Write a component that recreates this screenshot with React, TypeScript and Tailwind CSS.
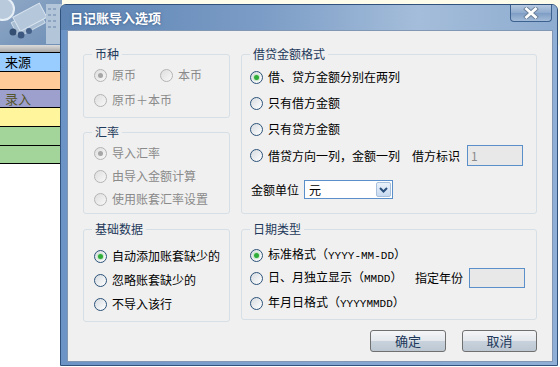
import React from 'react';

function Radio({ checked, disabled }: { checked?: boolean; disabled?: boolean }) {
  if (disabled) {
    return (
      <span className="flex h-[13px] w-[13px] shrink-0 items-center justify-center rounded-full border border-[#b4b4b4] bg-[linear-gradient(135deg,#dedede,#f8f8f8)]">
        {checked && <span className="h-[5px] w-[5px] rounded-full bg-[#a6a6a6]" />}
      </span>
    );
  }
  return (
    <span className="flex h-[13px] w-[13px] shrink-0 items-center justify-center rounded-full border border-[#2c5278] bg-[linear-gradient(135deg,#d6dbe0,#ffffff)]">
      {checked && <span className="h-[5px] w-[5px] rounded-full bg-[#2eab38] shadow-[0_0_0_1px_#c8e8c8]" />}
    </span>
  );
}

function Option({ label, checked, disabled, width }: { label: React.ReactNode; checked?: boolean; disabled?: boolean; width?: string }) {
  return (
    <div className={'flex h-[14px] items-center gap-[5px] ' + (width ?? '')}>
      <Radio checked={checked} disabled={disabled} />
      <span className={disabled ? 'whitespace-nowrap text-[#8a8a8a]' : 'whitespace-nowrap text-black'}>{label}</span>
    </div>
  );
}

function Group({ title, className, children }: { title: string; className: string; children: React.ReactNode }) {
  return (
    <div className={'relative rounded-[3px] border border-[#d5dfe5] ' + className}>
      <span className="absolute left-[8px] top-[-8px] bg-[#f0f0f0] px-[3px] leading-[14px] text-[#1e395b]">{title}</span>
      {children}
    </div>
  );
}

const Mono = ({ children }: { children: string }) => (
  <span className="font-['Liberation_Mono',monospace] text-[11px]">{children}</span>
);

function Banner() {
  return (
    <svg width="62" height="45" viewBox="0 0 62 45">
      <defs>
        <linearGradient id="bn" x1="0" y1="0" x2="1" y2="1">
          <stop offset="0" stopColor="#8fa8c6" />
          <stop offset="1" stopColor="#6f8fb6" />
        </linearGradient>
      </defs>
      <rect width="62" height="45" fill="url(#bn)" />
      <circle cx="3" cy="9" r="11" fill="#b9cadc" stroke="#e6eef6" strokeWidth="2" />
      <g transform="rotate(-28 30 24)">
        <rect x="14" y="14" width="30" height="16" fill="#a9bdd3" stroke="#cddbe9" />
        <rect x="18" y="10" width="30" height="16" fill="#b5c7db" stroke="#dae5f0" />
      </g>
      <circle cx="13" cy="32" r="3.5" fill="#354f73" />
      <circle cx="21" cy="35" r="3.5" fill="#3d5880" />
      <circle cx="29" cy="31" r="3" fill="#45618a" />
      <rect x="46" y="4" width="16" height="40" fill="#b3c5d9" />
      <g fill="#8ea5c2">
        <rect x="48" y="8" width="3" height="2" />
        <rect x="53" y="8" width="3" height="2" />
        <rect x="48" y="14" width="3" height="2" />
        <rect x="53" y="14" width="3" height="2" />
        <rect x="48" y="20" width="3" height="2" />
        <rect x="53" y="20" width="3" height="2" />
        <rect x="48" y="26" width="3" height="2" />
        <rect x="53" y="26" width="3" height="2" />
      </g>
    </svg>
  );
}

export default function App() {
  return (
    <div className="relative h-[367px] w-[560px] overflow-hidden bg-white font-['Noto_Sans_CJK_SC',sans-serif] text-[12px] leading-[14px]">
      {/* background application */}
      <div className="flex h-[45px]">
        <Banner />
        <div className="flex-1 bg-[#fdfbe9]" />
      </div>
      <div className="h-[8px] w-[62px] border-b border-black bg-[linear-gradient(#dcdcdc,#a6a6a6)]" />
      <div className="flex w-[62px] flex-col text-[13px]">
        <div className="flex h-[19px] items-center border-b border-black bg-[#99ccff] pl-[5px] text-black">来源</div>
        <div className="h-[18px] border-b border-black bg-[#ffcc99]" />
        <div className="flex h-[18px] items-center border-b border-black bg-[#9d9fcd] pl-[5px] text-[#55552a]">录入</div>
        <div className="h-[19px] border-b border-black bg-[#fff59c]" />
        <div className="h-[19px] border-b border-black bg-[#a3d49a]" />
        <div className="h-[18px] border-b border-black bg-[#a3d49a]" />
      </div>

      {/* dialog window */}
      <div className="absolute left-[60px] top-[4px] flex h-[362px] w-[498px] flex-col rounded-t-[6px] border border-[#30527c] bg-[linear-gradient(90deg,#6c93c5,#7fa2cf_40%,#90afd6)]">
        <div className="flex h-[25px] shrink-0 items-start justify-between rounded-t-[5px] bg-[linear-gradient(90deg,#5d84b3_0%,#7b9cc6_40%,#a4bdda_72%,#8eacd0_100%)]">
          <span className="ml-[9px] mt-[5px] text-[13px] font-bold leading-[16px] text-white [text-shadow:0_0_3px_#3a5a85]">日记账导入选项</span>
          <div className="mr-[5px] flex h-[17px] w-[42px] items-center justify-center rounded-b-[4px] border border-t-0 border-[#3e628f] bg-[linear-gradient(#b6c9df,#8eaacd_50%,#7e9dc4_51%,#a3bbd8)]">
            <svg width="16" height="12" viewBox="0 0 16 12">
              <path d="M3.5 2 L12.5 10 M12.5 2 L3.5 10" stroke="#6a7f99" strokeWidth="4.6" strokeLinecap="square" />
              <path d="M3.5 2 L12.5 10 M12.5 2 L3.5 10" stroke="#ffffff" strokeWidth="2.8" strokeLinecap="square" />
            </svg>
          </div>
        </div>

        <div className="mx-[6px] mb-[3px] mr-[4px] flex-1 border border-[#8197b4] bg-[#f0f0f0]">
          <div className="grid grid-cols-[147px_296px] gap-x-[11px] pl-[15px] pt-[23px]">
            {/* left column */}
            <div className="flex flex-col">
              <Group title="币种" className="h-[64px] pl-[10px] pt-[13px]">
                <div className="flex">
                  <Option label="原币" checked disabled width="w-[66px]" />
                  <Option label="本币" disabled />
                </div>
                <div className="mt-[11px]">
                  <Option label="原币＋本币" disabled />
                </div>
              </Group>
              <Group title="汇率" className="mt-[14px] flex h-[82px] flex-col gap-[9px] pl-[10px] pt-[13px]">
                <Option label="导入汇率" checked disabled />
                <Option label="由导入金额计算" disabled />
                <Option label="使用账套汇率设置" disabled />
              </Group>
              <Group title="基础数据" className="mt-[15px] flex h-[93px] flex-col gap-[10px] pl-[10px] pt-[19px]">
                <Option label="自动添加账套缺少的" checked />
                <Option label="忽略账套缺少的" />
                <Option label="不导入该行" />
              </Group>
            </div>

            {/* right column */}
            <div className="flex flex-col">
              <Group title="借贷金额格式" className="h-[160px] pl-[8px] pt-[15px]">
                <Option label="借、贷方金额分别在两列" checked />
                <div className="mt-[12px]">
                  <Option label="只有借方金额" />
                </div>
                <div className="mt-[12px]">
                  <Option label="只有贷方金额" />
                </div>
                <div className="mt-[9px] flex h-[21px] items-center">
                  <Option label="借贷方向一列，金额一列" width="w-[162px]" />
                  <span className="w-[55px] whitespace-nowrap">借方标识</span>
                  <div className="flex h-[21px] w-[56px] items-center border border-[#5a8fca] bg-[#e8e8e8] pl-[3px] text-[#8a8a8a]">1</div>
                </div>
                <div className="mt-[14px] flex h-[19px] items-center gap-[5px] pl-[1px]">
                  <span className="whitespace-nowrap">金额单位</span>
                  <div className="flex h-[19px] w-[89px] items-center justify-between border border-[#5a8fca] bg-white pl-[4px] pr-[1px]">
                    <span>元</span>
                    <span className="flex h-[15px] w-[15px] items-center justify-center rounded-[2px] border border-[#a8c0dc] bg-[linear-gradient(#eaf2fb,#c7daf0)]">
                      <svg width="9" height="6" viewBox="0 0 9 6">
                        <path d="M1 1 L4.5 4.5 L8 1" fill="none" stroke="#2a4f7c" strokeWidth="2" />
                      </svg>
                    </span>
                  </div>
                </div>
              </Group>
              <Group title="日期类型" className="mt-[15px] h-[91px] pl-[8px] pt-[18px]">
                <Option label={<>标准格式（<Mono>YYYY-MM-DD</Mono>）</>} checked />
                <div className="mt-[6px] flex h-[20px] items-center">
                  <Option label={<>日、月独立显示（<Mono>MMDD</Mono>）</>} width="w-[165px]" />
                  <span className="w-[54px] whitespace-nowrap">指定年份</span>
                  <div className="h-[20px] w-[56px] border border-[#5a8fca] bg-[#e8e8e8]" />
                </div>
                <div className="mt-[8px]">
                  <Option label={<>年月日格式（<Mono>YYYYMMDD</Mono>）</>} />
                </div>
              </Group>
              <div className="mt-[10px] flex justify-end gap-[16px]">
                <button className="h-[22px] w-[76px] rounded-[3px] border border-[#707070] bg-[linear-gradient(#f4f5f7_0%,#e4e8ec_48%,#c8d2dc_52%,#bcc7d2_100%)] text-[13px] text-[#1e395b]">确定</button>
                <button className="h-[22px] w-[75px] rounded-[3px] border border-[#707070] bg-[linear-gradient(#f4f5f7_0%,#e4e8ec_48%,#c8d2dc_52%,#bcc7d2_100%)] text-[13px] text-[#1e395b]">取消</button>
              </div>
            </div>
          </div>
        </div>
      </div>
    </div>
  );
}
